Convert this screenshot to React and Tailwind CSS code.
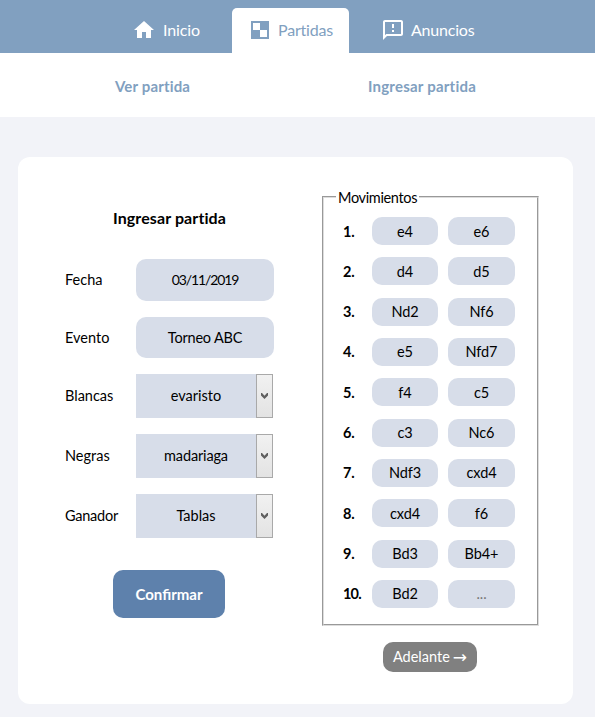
const moves = [
  ['e4', 'e6'],
  ['d4', 'd5'],
  ['Nd2', 'Nf6'],
  ['e5', 'Nfd7'],
  ['f4', 'c5'],
  ['c3', 'Nc6'],
  ['Ndf3', 'cxd4'],
  ['cxd4', 'f6'],
  ['Bd3', 'Bb4+'],
  ['Bd2', '...'],
];

function HomeIcon() {
  return (
    <svg className="size-6 shrink-0 fill-current" viewBox="0 0 24 24">
      <path d="M10 20v-6h4v6h5v-8h3L12 3 2 12h3v8z" />
    </svg>
  );
}

function BoardIcon() {
  return (
    <svg className="size-6 shrink-0 fill-current" viewBox="0 0 24 24">
      <path fillRule="evenodd" d="M3 3h18v18H3zM5 5v7h7V5zM12 12v7h7v-7z" />
    </svg>
  );
}

function NoticeIcon() {
  return (
    <svg className="size-6 shrink-0 fill-current" viewBox="0 0 24 24">
      <path d="M20 2H4c-1.1 0-1.99.9-1.99 2L2 22l4-4h14c1.1 0 2-.9 2-2V4c0-1.1-.9-2-2-2zm0 14H5.17L4 17.17V4h16v12zM11 12h2v2h-2zM11 6h2v4h-2z" />
    </svg>
  );
}

function SelectBox({ children }) {
  return (
    <button type="button" className="flex h-11 w-[137px] bg-[#d7dde9]">
      <span className="flex-1 self-center">{children}</span>
      <span className="flex h-11 w-[17px] items-center justify-center border border-[#a9a9a9] bg-linear-to-b from-[#f1f1f1] to-[#e3e3e3]">
        <svg className="h-[6px] w-[7px]" viewBox="0 0 7 6">
          <path d="M0 0H1L3.5 2.7L6 0H7V2.4L3.5 6L0 2.4z" fill="#606060" />
        </svg>
      </span>
    </button>
  );
}

function Row({ label, children }) {
  return (
    <div className="flex items-center">
      <span className="w-[71px]">{label}</span>
      {children}
    </div>
  );
}

export default function App() {
  return (
    <div className="h-[717px] w-[595px] overflow-hidden bg-[#f2f3f8] font-['Lato',sans-serif] text-[14.5px] leading-5 text-black">
      <header className="flex h-[53px] bg-[#81a0c0] pt-2 text-base text-white">
        <a className="ml-[115px] flex h-[45px] w-[117px] items-center gap-[7px] pb-px pl-[17px]">
          <HomeIcon />
          <span className="tracking-[-0.1px]">Inicio</span>
        </a>
        <a className="flex h-[45px] w-[117px] items-center gap-[6px] rounded-t-[5px] bg-white pb-px pl-4 text-[#81a0c0]">
          <BoardIcon />
          <span className="tracking-[-0.2px]">Partidas</span>
        </a>
        <a className="flex h-[45px] items-center gap-1.5 pb-px pl-8">
          <NoticeIcon />
          <span className="tracking-[-0.2px]">Anuncios</span>
        </a>
      </header>

      <nav className="flex h-16 items-center bg-white pt-0.5 text-[15px] font-bold text-[#81a0c0]">
        <a className="ml-[115px] w-[253px] tracking-[0.15px]">Ver partida</a>
        <a className="tracking-[0.22px]">Ingresar partida</a>
      </nav>

      <main className="mx-[18px] mt-10 flex h-[547px] w-[555px] rounded-xl bg-white">
        <form className="ml-[47px] w-[209px] pt-[51px]">
          <h1 className="text-center text-[16px] leading-5 font-bold tracking-[0.1px]">Ingresar partida</h1>
          <div className="mt-[31px] flex flex-col gap-4">
            <Row label="Fecha">
              <div className="flex h-[42px] w-[138px] items-center justify-center rounded-[10px] bg-[#d7dde9] text-[14px] tracking-[-1.1px]">03/11/2019</div>
            </Row>
            <Row label="Evento">
              <div className="flex h-[41px] w-[138px] items-center justify-center rounded-[10px] bg-[#d7dde9] tracking-[-0.2px]">Torneo ABC</div>
            </Row>
            <Row label="Blancas"><SelectBox>evaristo</SelectBox></Row>
            <Row label="Negras">
              <SelectBox><span className="tracking-[-0.15px]">madariaga</span></SelectBox>
            </Row>
            <Row label={<span className="tracking-[-0.25px]">Ganador</span>}><SelectBox>Tablas</SelectBox></Row>
          </div>
          <button type="button" className="mt-8 ml-12 block h-12 w-28 rounded-[10px] bg-[#5e81ac] text-[15px] font-bold text-white">
            Confirmar
          </button>
        </form>

        <section className="ml-12 w-[217px] pt-[39px]">
          <div className="h-[430px] border border-t-[#999] border-r-[#ddd] border-b-[#ddd] border-l-[#999]">
            <div className="h-[428px] border border-t-[#ddd] border-r-[#999] border-b-[#999] border-l-[#ddd] pl-[19px]">
              <h2 className="mt-[-11px] ml-[-7px] w-[83px] bg-white pt-px pl-0.5 tracking-[-0.35px]">Movimientos</h2>
              <div className="mt-[9px] flex flex-col gap-[12.33px]">
                {moves.map(([white, black], i) => (
                  <div key={i} className="flex h-7 items-center">
                    <b className={i === 9 ? 'w-[29px] pt-px tracking-[-0.8px]' : 'w-[29px] pt-px tracking-[-0.2px]'}>{i + 1}.</b>
                    <span className="flex h-7 w-[66px] items-center justify-center rounded-[10px] bg-[#d7dde9] pt-px tracking-[-0.1px]">{white}</span>
                    <span className={`ml-2.5 flex h-7 w-[67px] items-center justify-center rounded-[10px] bg-[#d7dde9] pt-px tracking-[-0.1px] ${black === '...' ? 'text-[#777]' : ''}`}>{black}</span>
                  </div>
                ))}
              </div>
            </div>
          </div>
          <button type="button" className="mt-4 ml-[61px] flex h-[30px] w-[94px] items-center justify-center gap-[3px] rounded-[10px] bg-[#808080] text-white">
            <span>Adelante</span>
            <span className="font-['DejaVu_Sans',sans-serif] text-[17px] leading-5">→</span>
          </button>
        </section>
      </main>
    </div>
  );
}
